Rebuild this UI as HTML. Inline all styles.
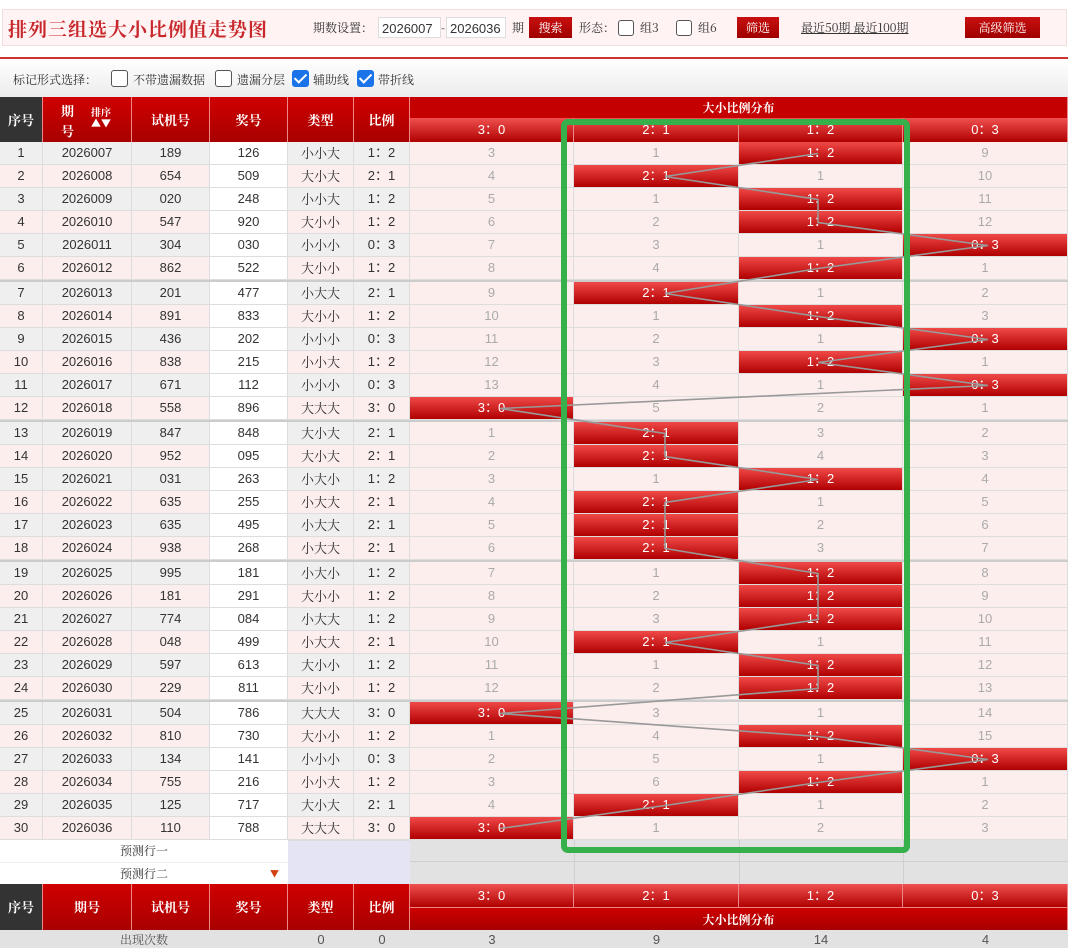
<!DOCTYPE html>
<html><head><meta charset="utf-8">
<style>
*{margin:0;padding:0}
body{width:1080px;height:948px;background:#fff;position:relative;overflow:hidden;font-family:"Liberation Sans","Noto Sans CJK SC",sans-serif;color:#333}
.top{position:absolute;left:2px;top:9px;width:1065px;height:37px;background:#fff3f3;border:1px solid #f2dede;box-sizing:border-box}
.title{position:absolute;left:8px;top:15px;font-size:19px;color:#c8282c;font-family:"Noto Serif CJK SC",serif;letter-spacing:1px;font-weight:bold}
.t{position:absolute;font-size:12px;color:#333;font-family:"Noto Serif CJK SC",serif}
.inp{position:absolute;top:17px;height:21px;border:1px solid #ddd;background:#fff;font-size:13px;line-height:21px;padding-left:3px;box-sizing:border-box}
.btn{position:absolute;top:17px;height:21px;background:linear-gradient(#c81010,#a00000);color:#fff;font-size:12px;line-height:21px;text-align:center;font-family:"Noto Serif CJK SC",serif}
.cb{position:absolute;width:16px;height:16px;border:1px solid #555;border-radius:3px;background:#fff;box-sizing:border-box}
.cbc{position:absolute;width:17px;height:17px;border-radius:3px;background:#1a73e8}
.cbc:after{content:"";position:absolute;left:5px;top:1px;width:5px;height:10px;border:solid #fff;border-width:0 2px 2px 0;transform:rotate(45deg)}
.redline{position:absolute;left:0;top:57px;width:1068px;height:2px;background:#c33}
.mark{position:absolute;left:0;top:59px;width:1068px;height:38px;background:linear-gradient(#fff,#ececec)}
.h{position:absolute;color:#fff;font-size:13px;text-align:center;font-family:"Noto Serif CJK SC",serif;font-weight:bold;box-sizing:border-box;border-right:1px solid #e88}
.hd{background:linear-gradient(#d00000,#a80000)}
.hs{background:linear-gradient(#f05050,#b00000);font-weight:normal;font-family:"Liberation Sans","Noto Sans CJK SC",sans-serif}
.r{position:absolute;left:0;width:1068px;height:23px;display:flex}
.r div{box-sizing:border-box;border-right:1px solid #ddd;border-bottom:1px solid #ddd;text-align:center;line-height:22px;font-size:13px;height:23px}
.r div:nth-child(1){width:43px}.r div:nth-child(2){width:89px}.r div:nth-child(3){width:78px}.r div:nth-child(4){width:78px;background:#fff}.r div:nth-child(5){width:66px;font-family:"Noto Serif CJK SC",serif}.r div:nth-child(6){width:56px}
.r div:nth-child(7){width:164px}.r div:nth-child(8){width:165px}.r div:nth-child(9){width:164px}.r div:nth-child(10){width:165px}
.o{background:#efefef}.e{background:#fdeeee}
.r div.d{background:#fdeeee;color:#aaa}
.r div.x{background:linear-gradient(#f04848,#b00000);color:#fff}
</style></head><body>
<div class="top"></div>
<div class="title">排列三组选大小比例值走势图</div>
<div class="t" style="left:313px;top:19px">期数设置：</div>
<div class="inp" style="left:378px;width:63px">2026007</div>
<div class="t" style="left:441px;top:19px">-</div>
<div class="inp" style="left:446px;width:60px">2026036</div>
<div class="t" style="left:512px;top:19px">期</div>
<div class="btn" style="left:529px;width:43px">搜索</div>
<div class="t" style="left:579px;top:19px">形态：</div>
<div class="cb" style="left:618px;top:20px"></div>
<div class="t" style="left:640px;top:19px">组3</div>
<div class="cb" style="left:676px;top:20px"></div>
<div class="t" style="left:698px;top:19px">组6</div>
<div class="btn" style="left:737px;width:42px">筛选</div>
<div class="t" style="left:801px;top:19px;text-decoration:underline">最近50期 最近100期</div>
<div class="btn" style="left:965px;width:75px">高级筛选</div>
<div class="redline"></div>
<div class="mark"></div>
<div class="t" style="left:13px;top:71px">标记形式选择：</div>
<div class="cb" style="left:111px;top:70px;width:17px;height:17px"></div>
<div class="t" style="left:133px;top:71px">不带遗漏数据</div>
<div class="cb" style="left:215px;top:70px;width:17px;height:17px"></div>
<div class="t" style="left:237px;top:71px">遗漏分层</div>
<div class="cbc" style="left:292px;top:70px"></div>
<div class="t" style="left:313px;top:71px">辅助线</div>
<div class="cbc" style="left:357px;top:70px"></div>
<div class="t" style="left:378px;top:71px">带折线</div>

<div class="h" style="left:0;top:97px;width:43px;height:45px;background:#333;line-height:45px">序号</div>
<div class="h hd" style="left:43px;top:97px;width:89px;height:45px"><span style="position:absolute;left:18px;top:4px">期</span><span style="position:absolute;left:18px;top:24px">号</span><span style="position:absolute;left:48px;top:9px;font-size:10px;line-height:11px">排序<br>▲▼</span></div>
<div class="h hd" style="left:132px;top:97px;width:78px;height:45px;line-height:45px">试机号</div>
<div class="h hd" style="left:210px;top:97px;width:78px;height:45px;line-height:45px">奖号</div>
<div class="h hd" style="left:288px;top:97px;width:66px;height:45px;line-height:45px">类型</div>
<div class="h hd" style="left:354px;top:97px;width:56px;height:45px;line-height:45px">比例</div>
<div class="h" style="left:410px;top:97px;width:658px;height:21px;background:#c40000;line-height:21px;font-size:12px">大小比例分布</div>
<div class="h hs" style="left:410px;top:118px;width:164px;height:24px;line-height:24px">3：0</div>
<div class="h hs" style="left:574px;top:118px;width:165px;height:24px;line-height:24px">2：1</div>
<div class="h hs" style="left:739px;top:118px;width:164px;height:24px;line-height:24px">1：2</div>
<div class="h hs" style="left:903px;top:118px;width:165px;height:24px;line-height:24px">0：3</div>

<div style="position:absolute;left:0;top:142px;width:1068px;height:698px;background:#ccc"></div>
<div class="r o" style="top:142px"><div>1</div><div>2026007</div><div>189</div><div>126</div><div>小小大</div><div>1：2</div><div class="d">3</div><div class="d">1</div><div class="x">1：2</div><div class="d">9</div></div>
<div class="r e" style="top:165px"><div>2</div><div>2026008</div><div>654</div><div>509</div><div>大小大</div><div>2：1</div><div class="d">4</div><div class="x">2：1</div><div class="d">1</div><div class="d">10</div></div>
<div class="r o" style="top:188px"><div>3</div><div>2026009</div><div>020</div><div>248</div><div>小小大</div><div>1：2</div><div class="d">5</div><div class="d">1</div><div class="x">1：2</div><div class="d">11</div></div>
<div class="r e" style="top:211px"><div>4</div><div>2026010</div><div>547</div><div>920</div><div>大小小</div><div>1：2</div><div class="d">6</div><div class="d">2</div><div class="x">1：2</div><div class="d">12</div></div>
<div class="r o" style="top:234px"><div>5</div><div>2026011</div><div>304</div><div>030</div><div>小小小</div><div>0：3</div><div class="d">7</div><div class="d">3</div><div class="d">1</div><div class="x">0：3</div></div>
<div class="r e" style="top:257px"><div>6</div><div>2026012</div><div>862</div><div>522</div><div>大小小</div><div>1：2</div><div class="d">8</div><div class="d">4</div><div class="x">1：2</div><div class="d">1</div></div>
<div class="r o" style="top:282px"><div>7</div><div>2026013</div><div>201</div><div>477</div><div>小大大</div><div>2：1</div><div class="d">9</div><div class="x">2：1</div><div class="d">1</div><div class="d">2</div></div>
<div class="r e" style="top:305px"><div>8</div><div>2026014</div><div>891</div><div>833</div><div>大小小</div><div>1：2</div><div class="d">10</div><div class="d">1</div><div class="x">1：2</div><div class="d">3</div></div>
<div class="r o" style="top:328px"><div>9</div><div>2026015</div><div>436</div><div>202</div><div>小小小</div><div>0：3</div><div class="d">11</div><div class="d">2</div><div class="d">1</div><div class="x">0：3</div></div>
<div class="r e" style="top:351px"><div>10</div><div>2026016</div><div>838</div><div>215</div><div>小小大</div><div>1：2</div><div class="d">12</div><div class="d">3</div><div class="x">1：2</div><div class="d">1</div></div>
<div class="r o" style="top:374px"><div>11</div><div>2026017</div><div>671</div><div>112</div><div>小小小</div><div>0：3</div><div class="d">13</div><div class="d">4</div><div class="d">1</div><div class="x">0：3</div></div>
<div class="r e" style="top:397px"><div>12</div><div>2026018</div><div>558</div><div>896</div><div>大大大</div><div>3：0</div><div class="x">3：0</div><div class="d">5</div><div class="d">2</div><div class="d">1</div></div>
<div class="r o" style="top:422px"><div>13</div><div>2026019</div><div>847</div><div>848</div><div>大小大</div><div>2：1</div><div class="d">1</div><div class="x">2：1</div><div class="d">3</div><div class="d">2</div></div>
<div class="r e" style="top:445px"><div>14</div><div>2026020</div><div>952</div><div>095</div><div>大小大</div><div>2：1</div><div class="d">2</div><div class="x">2：1</div><div class="d">4</div><div class="d">3</div></div>
<div class="r o" style="top:468px"><div>15</div><div>2026021</div><div>031</div><div>263</div><div>小大小</div><div>1：2</div><div class="d">3</div><div class="d">1</div><div class="x">1：2</div><div class="d">4</div></div>
<div class="r e" style="top:491px"><div>16</div><div>2026022</div><div>635</div><div>255</div><div>小大大</div><div>2：1</div><div class="d">4</div><div class="x">2：1</div><div class="d">1</div><div class="d">5</div></div>
<div class="r o" style="top:514px"><div>17</div><div>2026023</div><div>635</div><div>495</div><div>小大大</div><div>2：1</div><div class="d">5</div><div class="x">2：1</div><div class="d">2</div><div class="d">6</div></div>
<div class="r e" style="top:537px"><div>18</div><div>2026024</div><div>938</div><div>268</div><div>小大大</div><div>2：1</div><div class="d">6</div><div class="x">2：1</div><div class="d">3</div><div class="d">7</div></div>
<div class="r o" style="top:562px"><div>19</div><div>2026025</div><div>995</div><div>181</div><div>小大小</div><div>1：2</div><div class="d">7</div><div class="d">1</div><div class="x">1：2</div><div class="d">8</div></div>
<div class="r e" style="top:585px"><div>20</div><div>2026026</div><div>181</div><div>291</div><div>大小小</div><div>1：2</div><div class="d">8</div><div class="d">2</div><div class="x">1：2</div><div class="d">9</div></div>
<div class="r o" style="top:608px"><div>21</div><div>2026027</div><div>774</div><div>084</div><div>小大大</div><div>1：2</div><div class="d">9</div><div class="d">3</div><div class="x">1：2</div><div class="d">10</div></div>
<div class="r e" style="top:631px"><div>22</div><div>2026028</div><div>048</div><div>499</div><div>小大大</div><div>2：1</div><div class="d">10</div><div class="x">2：1</div><div class="d">1</div><div class="d">11</div></div>
<div class="r o" style="top:654px"><div>23</div><div>2026029</div><div>597</div><div>613</div><div>大小小</div><div>1：2</div><div class="d">11</div><div class="d">1</div><div class="x">1：2</div><div class="d">12</div></div>
<div class="r e" style="top:677px"><div>24</div><div>2026030</div><div>229</div><div>811</div><div>大小小</div><div>1：2</div><div class="d">12</div><div class="d">2</div><div class="x">1：2</div><div class="d">13</div></div>
<div class="r o" style="top:702px"><div>25</div><div>2026031</div><div>504</div><div>786</div><div>大大大</div><div>3：0</div><div class="x">3：0</div><div class="d">3</div><div class="d">1</div><div class="d">14</div></div>
<div class="r e" style="top:725px"><div>26</div><div>2026032</div><div>810</div><div>730</div><div>大小小</div><div>1：2</div><div class="d">1</div><div class="d">4</div><div class="x">1：2</div><div class="d">15</div></div>
<div class="r o" style="top:748px"><div>27</div><div>2026033</div><div>134</div><div>141</div><div>小小小</div><div>0：3</div><div class="d">2</div><div class="d">5</div><div class="d">1</div><div class="x">0：3</div></div>
<div class="r e" style="top:771px"><div>28</div><div>2026034</div><div>755</div><div>216</div><div>小小大</div><div>1：2</div><div class="d">3</div><div class="d">6</div><div class="x">1：2</div><div class="d">1</div></div>
<div class="r o" style="top:794px"><div>29</div><div>2026035</div><div>125</div><div>717</div><div>大小大</div><div>2：1</div><div class="d">4</div><div class="x">2：1</div><div class="d">1</div><div class="d">2</div></div>
<div class="r e" style="top:817px"><div>30</div><div>2026036</div><div>110</div><div>788</div><div>大大大</div><div>3：0</div><div class="x">3：0</div><div class="d">1</div><div class="d">2</div><div class="d">3</div></div>

<div style="position:absolute;left:0;top:840px;width:288px;height:22px;background:#fff;border-bottom:1px solid #eee;font-size:12px;line-height:22px;text-align:center;font-family:'Noto Serif CJK SC',serif">预测行一</div>
<div style="position:absolute;left:0;top:863px;width:288px;height:21px;background:#fff;font-size:12px;line-height:21px;text-align:center;font-family:'Noto Serif CJK SC',serif">预测行二<span style="position:absolute;left:270px;top:0;color:#d04010;font-size:9px">▼</span></div>
<div style="position:absolute;left:288px;top:840px;width:122px;height:44px;background:#e4e4f4;border-top:1px solid #ddd"></div>
<div style="position:absolute;left:410px;top:840px;width:658px;height:44px;background:#e2e2e2"></div>
<div style="position:absolute;left:410px;top:861px;width:658px;height:1px;background:#d0d0d0"></div>
<div style="position:absolute;left:574px;top:840px;width:1px;height:44px;background:#d0d0d0"></div>
<div style="position:absolute;left:739px;top:840px;width:1px;height:44px;background:#d0d0d0"></div>
<div style="position:absolute;left:903px;top:840px;width:1px;height:44px;background:#d0d0d0"></div>

<div class="h" style="left:0;top:884px;width:43px;height:46px;background:#333;line-height:46px">序号</div>
<div class="h hd" style="left:43px;top:884px;width:89px;height:46px;line-height:46px">期号</div>
<div class="h hd" style="left:132px;top:884px;width:78px;height:46px;line-height:46px">试机号</div>
<div class="h hd" style="left:210px;top:884px;width:78px;height:46px;line-height:46px">奖号</div>
<div class="h hd" style="left:288px;top:884px;width:66px;height:46px;line-height:46px">类型</div>
<div class="h hd" style="left:354px;top:884px;width:56px;height:46px;line-height:46px">比例</div>
<div class="h hs" style="left:410px;top:884px;width:164px;height:23px;line-height:23px">3：0</div>
<div class="h hs" style="left:574px;top:884px;width:165px;height:23px;line-height:23px">2：1</div>
<div class="h hs" style="left:739px;top:884px;width:164px;height:23px;line-height:23px">1：2</div>
<div class="h hs" style="left:903px;top:884px;width:165px;height:23px;line-height:23px">0：3</div>
<div class="h" style="left:410px;top:907px;width:658px;height:23px;background:linear-gradient(#cc0000,#a80000);line-height:23px;font-size:12px;border-top:1px solid #e88">大小比例分布</div>
<div style="position:absolute;left:0;top:930px;width:1068px;height:18px;background:#e2e2e2;font-size:13px;line-height:20px;color:#555">
<span style="position:absolute;left:0;width:288px;text-align:center;font-family:'Noto Serif CJK SC',serif;font-size:12px">出现次数</span>
<span style="position:absolute;left:288px;width:66px;text-align:center">0</span>
<span style="position:absolute;left:354px;width:56px;text-align:center">0</span>
<span style="position:absolute;left:410px;width:164px;text-align:center">3</span>
<span style="position:absolute;left:574px;width:165px;text-align:center">9</span>
<span style="position:absolute;left:739px;width:164px;text-align:center">14</span>
<span style="position:absolute;left:903px;width:165px;text-align:center">4</span>
</div>

<svg style="position:absolute;left:0;top:0" width="1080" height="948">
<polyline fill="none" stroke="#999" stroke-width="1.6" points="818,153.5 665,176.5 818,199.5 818,222.5 988,245.5 818,268.5 665,293.5 818,316.5 988,339.5 818,362.5 988,385.5 500,408.5 665,433.5 665,456.5 818,479.5 665,502.5 665,525.5 665,548.5 818,573.5 818,596.5 818,619.5 665,642.5 818,665.5 818,688.5 500,713.5 818,736.5 988,759.5 818,782.5 665,805.5 500,828.5"/>
<rect x="564" y="122" width="343" height="728" rx="4" fill="none" stroke="#35b04a" stroke-width="6"/>
</svg>
</body></html>
